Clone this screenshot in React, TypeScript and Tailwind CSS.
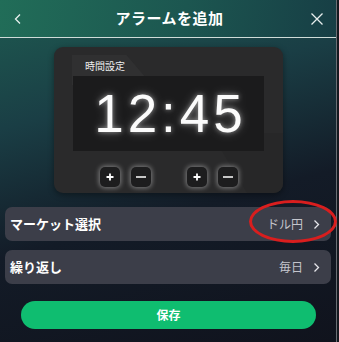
import React from "react";

const jp = { fontFamily: '"Noto Sans CJK JP", "Noto Sans", sans-serif' };

function Btn({ sign }: { sign: "+" | "-" }) {
  return (
    <div className="w-[20px] h-[20px] rounded-[5px] bg-[#1d1d1e] shadow-[0_0_5px_1px_rgba(255,255,255,0.4)] flex items-center justify-center">
      {sign === "+" ? (
        <svg width="10" height="10" viewBox="0 0 10 10">
          <path d="M5 1.5v7M1.5 5h7" stroke="#fff" strokeWidth="1.8" />
        </svg>
      ) : (
        <svg width="12" height="10" viewBox="0 0 12 10">
          <path d="M1 5h10" stroke="#fff" strokeWidth="1.4" />
        </svg>
      )}
    </div>
  );
}

function Chevron() {
  return (
    <svg width="7" height="11" viewBox="0 0 7 11" className="ml-[10px]">
      <path d="M1.5 1.5l4 4-4 4" stroke="#e6e6ea" strokeWidth="1.3" fill="none" />
    </svg>
  );
}

export default function App() {
  return (
    <div className="w-[339px] h-[342px] bg-[#15181f] overflow-hidden" style={jp}>
      <div className="relative w-[337px] h-[342px] border-r border-[#6a6f74] flex flex-col bg-[linear-gradient(165deg,#1e5b51_0%,#1a3e45_30%,#131b27_60%,#10131d_100%)]">
        {/* header */}
        <div className="h-[37px] shrink-0 flex items-center justify-between px-[12px] bg-[linear-gradient(100deg,#216d58_0%,#1c5650_55%,#173e45_100%)]">
          <svg width="10" height="12" viewBox="0 0 10 12" className="ml-[1px]">
            <path d="M7 1.5L2.5 6 7 10.5" stroke="#e8f0ee" strokeWidth="1.3" fill="none" />
          </svg>
          <div className="text-white text-[15px] font-bold tracking-[0.5px] ml-[6px]">アラームを追加</div>
          <svg width="14" height="14" viewBox="0 0 14 14">
            <path d="M1.5 1.5l11 11M12.5 1.5l-11 11" stroke="#e8eeee" strokeWidth="1.3" />
          </svg>
        </div>
        <div className="h-[1px] bg-[#cfdcd8] shrink-0" />

        {/* clock panel */}
        <div className="mt-[9px] w-[229px] h-[146px] shrink-0 rounded-[9px] bg-[#2a2a2b] relative overflow-hidden shadow-[0_2px_6px_rgba(0,0,0,0.4)] ml-[54px]">
          <div className="absolute left-[18px] top-[8px] w-[80px] h-[30px] bg-[#303031] [clip-path:polygon(0_0,68%_0,100%_100%,0_100%)]" />
          <div className="absolute right-0 bottom-0 w-[120px] h-[60px] bg-[#262627] [clip-path:polygon(40%_0,100%_0,100%_100%,70%_100%)] opacity-60" />
          <div className="relative pl-[31px] pt-[12px] text-[10px] leading-[14px] text-[#eeeeee]">時間設定</div>
          <div className="relative mx-[19px] mt-[3px] h-[75px] bg-[#1b1b1c] flex items-center justify-center">
            <div
              className="text-[#fbfbfb] text-[53px] leading-none tracking-[4px] font-normal pl-[4px] [text-shadow:0_0_5px_rgba(255,255,255,0.5),0_0_12px_rgba(255,255,255,0.25)]"
              style={{ fontFamily: '"Liberation Sans", Arial, sans-serif' }}
            >
              12:45
            </div>
          </div>
          <div className="relative flex justify-center gap-[36px] mt-[16px]">
            <div className="flex gap-[11px]">
              <Btn sign="+" />
              <Btn sign="-" />
            </div>
            <div className="flex gap-[11px]">
              <Btn sign="+" />
              <Btn sign="-" />
            </div>
          </div>
        </div>

        {/* rows */}
        <div className="mt-[14px] mx-[5px] flex flex-col gap-[9px]">
          <div className="h-[34px] rounded-[7px] bg-[#3c3e49] flex items-center justify-between pl-[5px] pr-[11px]">
            <span className="text-white text-[13px] font-bold">マーケット選択</span>
            <div className="flex items-center">
              <span className="text-[#c4c5cc] text-[12px]">ドル円</span>
              <Chevron />
            </div>
          </div>
          <div className="h-[34px] rounded-[7px] bg-[#3c3e49] flex items-center justify-between pl-[5px] pr-[11px]">
            <span className="text-white text-[13px] font-bold">繰り返し</span>
            <div className="flex items-center">
              <span className="text-[#c4c5cc] text-[12px]">毎日</span>
              <Chevron />
            </div>
          </div>
        </div>

        {/* save */}
        <div className="mt-[17px] mx-[21px] h-[28px] rounded-full bg-[#0fbd70] flex items-center justify-center w-[295px]">
          <span className="text-white text-[12px] font-bold">保存</span>
        </div>

        {/* red ellipse annotation */}
        <div className="absolute left-[249px] top-[200px] w-[88px] h-[43px] rounded-[50%] border-[3px] border-[#d91e1e]" />
      </div>
    </div>
  );
}
